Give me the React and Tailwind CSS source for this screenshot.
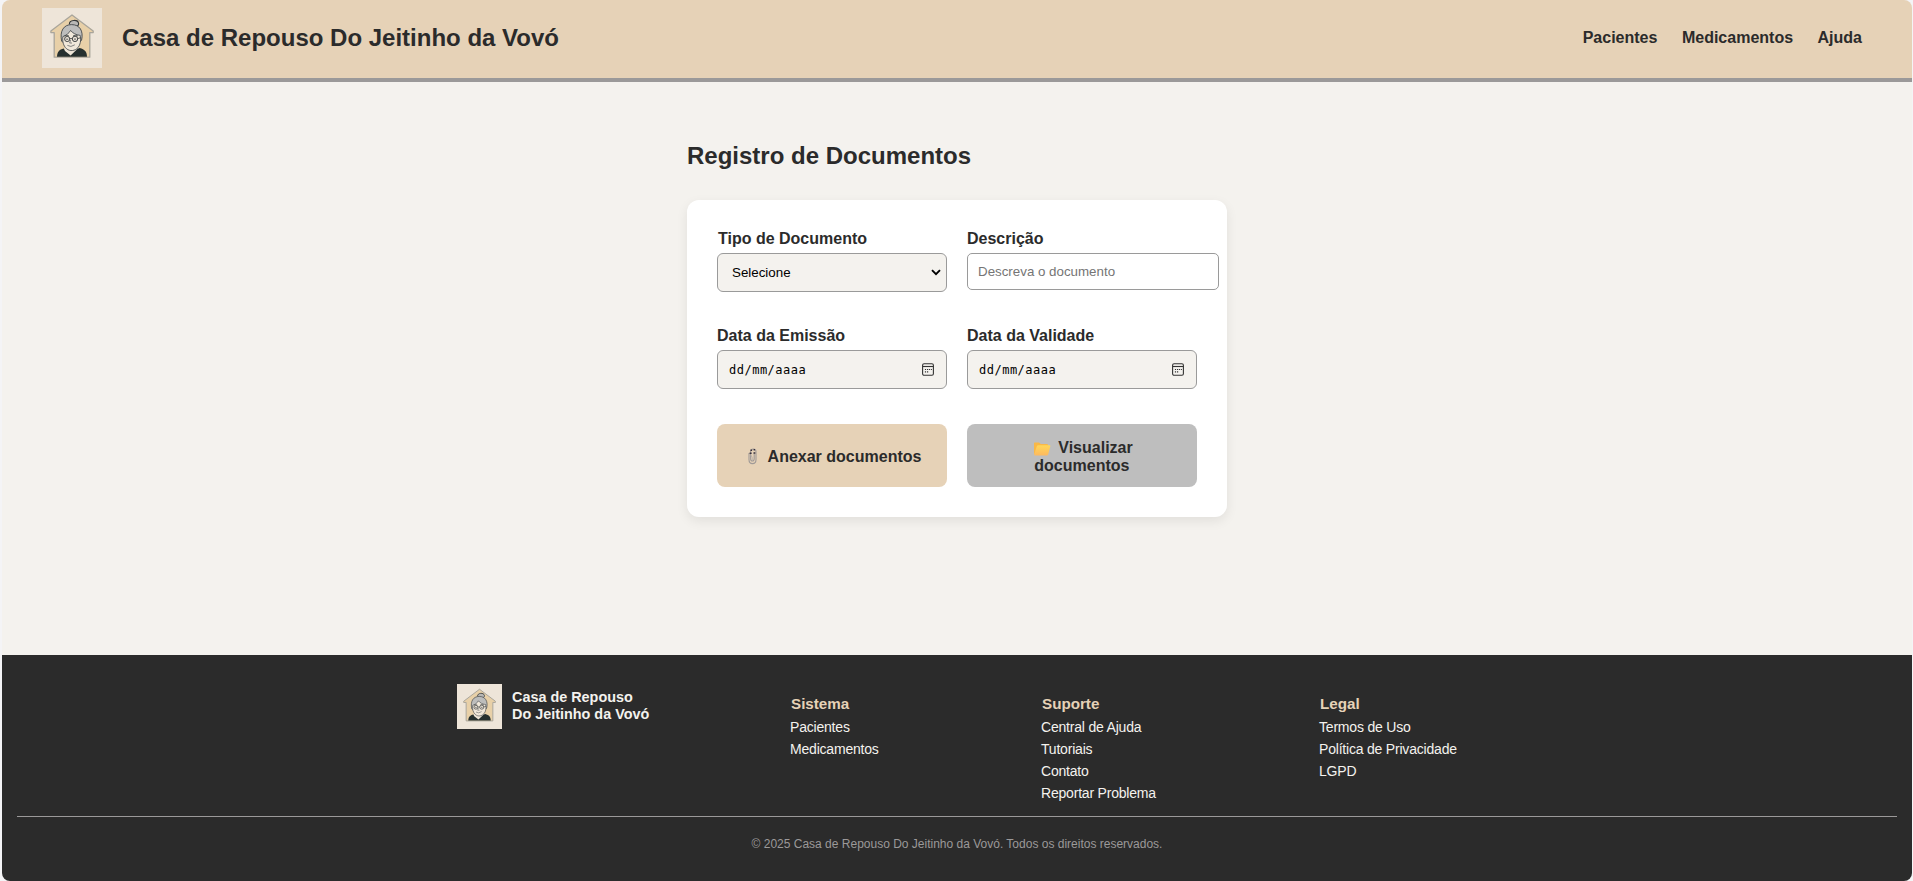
import React from "react";

function Logo({ className }) {
  return (
    <svg viewBox="0 0 60 60" className={className} aria-hidden="true">
      <rect width="60" height="60" fill="#eee5d9" />
      <path
        d="M30 7 L51.2 23 V24.6 H47.8 V49.2 H12.2 V24.6 H8.9 V23 Z"
        fill="#e8d0a8"
        stroke="#a9a59b"
        strokeWidth="1.3"
        strokeLinejoin="round"
      />
      <path d="M23 38 L36 36 L37 41.5 L29 48 L22 43 Z" fill="#efe6d8" />
      <path
        d="M15 48.8 C15.4 44 17 41.8 21.8 40.6 L23 43 L28.6 47.4 L35.6 40.8 L37.6 40 C43 41.4 45 44 45 48.8 Z"
        fill="#26302f"
      />
      <path
        d="M27.4 16.4 C27 11.6 36 11 36.6 15.4 C36.8 17 35.6 18 34.6 18.2"
        fill="#b9b8b6"
        stroke="#35393a"
        strokeWidth="1.1"
      />
      <path
        d="M19.6 33 C17.6 23 21.6 16.6 29.6 16.6 C37.8 16.6 41.6 23 39.6 32 L38 34 L21 34.5 Z"
        fill="#bdbdbc"
        stroke="#42464a"
        strokeWidth="0.9"
      />
      <path
        d="M20.9 28.6 C24 27.4 27 25.4 28.6 22.4 C30.8 25.4 34 26.8 38.2 27.4 C39.2 32.6 38.4 36.6 36 39.6 C33 43 28 43.6 24.6 40.8 C21.2 37.8 20.3 33 20.9 28.6 Z"
        fill="#f1e8da"
        stroke="#3c4144"
        strokeWidth="0.8"
      />
      <path d="M22.4 28 Q24.6 26.8 27 28 M31 27.9 Q33.4 26.8 36 28" stroke="#35393a" strokeWidth="0.8" fill="none" />
      <circle cx="25.2" cy="31" r="2.6" fill="#e9e1d5" stroke="#35393a" strokeWidth="0.9" />
      <circle cx="33" cy="30.9" r="2.7" fill="#e9e1d5" stroke="#35393a" strokeWidth="0.9" />
      <path d="M24.2 31.2 h2 M32 31.1 h2 M27.8 30.6 h2.6 M35.7 30.6 L38.4 29.8" stroke="#35393a" strokeWidth="0.8" />
      <path d="M28.6 32 L27.6 35 H30 M25.4 37.4 Q28.8 39.8 32.8 36.8" stroke="#55585a" strokeWidth="0.7" fill="none" />
    </svg>
  );
}

function CalendarIcon() {
  return (
    <svg viewBox="0 0 12 13" className="h-[13px] w-3" fill="none" aria-hidden="true">
      <rect x="0.6" y="0.7" width="10.8" height="11.6" rx="1.5" stroke="#333" strokeWidth="1.1" />
      <path d="M0.8 3.5 H11.2" stroke="#333" strokeWidth="1.1" />
      <path d="M5 6.5 h1.2 M7 6.5 h1.2 M9 6.5 h.9 M2.9 6.5 h1.2 M2.9 8.8 h1.2 M5 8.8 h1.2" stroke="#333" strokeWidth="1.2" />
    </svg>
  );
}

function PaperclipIcon() {
  return (
    <svg viewBox="0 0 9 17" className="h-[17px] w-[9px] shrink-0" fill="none" aria-hidden="true">
      <path d="M1 5 V11.5 C1 17 8 17 8 11.5 V3.5 C8 .1 2.6 .1 2.6 3.5 V10.8 C2.6 13.8 6.2 13.8 6.2 10.8 V5.5" stroke="#a09a97" strokeWidth="1.1" />
      <path d="M2.8 7 L4.2 9.4 V12.2" stroke="#b9b1ab" strokeWidth="1" />
      <path d="M2.5 2.2 h1.6 M5.6 1.7 h1.4 M1.6 5.2 h2 M5.5 4.9 h1.8" stroke="#37303d" strokeWidth="1.5" />
    </svg>
  );
}

function FolderIcon() {
  return (
    <svg viewBox="0 0 17 14" className="mr-[7px] inline-block h-3.5 w-[17px] align-[-3px]" aria-hidden="true">
      <defs>
        <linearGradient id="folder-front" x1="0" y1="0" x2="0" y2="1">
          <stop offset="0" stopColor="#ffd75a" />
          <stop offset="1" stopColor="#fdb95f" />
        </linearGradient>
      </defs>
      <path d="M0 1.2 Q0 0.4 .8 .4 H5 L6.8 2 H13 Q14 2 14 3 V12 H1 Q0 12 0 11 Z" fill="#f9b847" />
      <path d="M4.3 3.2 H15.6 Q16.6 3.2 16.3 4.2 L14.2 12.6 Q13.9 13.6 12.9 13.6 H1 Q0 13.6 .2 12.6 L2.8 4.3 Q3.2 3.2 4.3 3.2 Z" fill="url(#folder-front)" />
    </svg>
  );
}

function DateField({ label }) {
  return (
    <div className="flex flex-col">
      <label className="text-base leading-[18px] font-bold">{label}</label>
      <div className="mt-[5px] flex h-[39px] items-center justify-between rounded-md border border-[#9a9a9a] bg-[#f4f2ee] pr-3 pl-[11px] text-black">
        <span className="font-['DejaVu_Sans_Mono',monospace] text-xs tracking-[0.5px]">dd/mm/aaaa</span>
        <CalendarIcon />
      </div>
    </div>
  );
}

function FooterColumn({ title, links }) {
  return (
    <div className="pt-[11px]">
      <h4 className="pl-px text-[15.2px] leading-[18px] font-bold text-[#e6d2b7]">{title}</h4>
      <ul className="mt-[3px]">
        {links.map((link) => (
          <li key={link} className="text-[14px] leading-[22px] tracking-[-0.2px] whitespace-nowrap">
            <a href="#">{link}</a>
          </li>
        ))}
      </ul>
    </div>
  );
}

export default function App() {
  return (
    <div className="h-[881px] bg-[#f4f4f6] pr-px pl-0.5 font-['Liberation_Sans',Arial,sans-serif] text-[#2b2b2b]">
      <div className="flex h-full flex-col overflow-hidden rounded-lg bg-[#f4f2ee]">
        <header className="flex h-[82px] items-center justify-between border-b-4 border-[#9b9999] bg-[#e6d2b7] pr-[50px] pb-0.5 pl-10">
          <div className="flex items-center gap-5">
            <Logo className="size-[60px]" />
            <h1 className="text-2xl font-bold">Casa de Repouso Do Jeitinho da Vovó</h1>
          </div>
          <nav className="flex gap-[24.5px] text-base font-bold">
            <a href="#">Pacientes</a>
            <a href="#">Medicamentos</a>
            <a href="#">Ajuda</a>
          </nav>
        </header>

        <main className="mx-auto w-[540px] flex-1 pt-[60px]">
          <h2 className="text-2xl leading-7 font-bold">Registro de Documentos</h2>
          <form className="mt-[30px] grid h-[317px] grid-cols-[230px_230px] content-start gap-x-5 rounded-xl bg-white px-[30px] pt-[30px] shadow-[0_4px_12px_rgba(0,0,0,0.08)]">
            <div className="flex h-[97px] flex-col">
              <label className="pl-px text-base leading-[18px] font-bold">Tipo de Documento</label>
              <div className="mt-[5px] flex h-[39px] items-center justify-between rounded-md border border-[#9a9a9a] bg-[#f4f2ee] pr-[5px] pl-3.5 text-[13.33px] text-black">
                <span>Selecione</span>
                <svg viewBox="0 0 10 7" className="h-[7px] w-2.5" fill="none" aria-hidden="true">
                  <path d="M1 1.2 L5 5.2 L9 1.2" stroke="#000" strokeWidth="1.9" />
                </svg>
              </div>
            </div>
            <div className="flex h-[97px] flex-col">
              <label className="text-base leading-[18px] font-bold">Descrição</label>
              <input
                type="text"
                placeholder="Descreva o documento"
                className="mt-[5px] h-[37px] w-[252px] rounded-[5px] border border-[#9a9a9a] bg-white px-2.5 text-[13.33px] placeholder:text-[#757575]"
              />
            </div>
            <DateField label="Data da Emissão" />
            <DateField label="Data da Validade" />
            <button type="button" className="mt-[35px] flex h-[63px] items-center justify-center gap-[11px] rounded-lg bg-[#e6d2b7] pt-0.5 pl-[5px] text-base font-bold">
              <PaperclipIcon />
              <span>Anexar documentos</span>
            </button>
            <button type="button" className="mt-[35px] flex h-[63px] items-center justify-center rounded-lg bg-[#bebebe] pt-0.5 pl-[3px] text-left text-base leading-[18px] font-bold">
              <span className="whitespace-nowrap">
                <FolderIcon />
                Visualizar
                <br />
                documentos
              </span>
            </button>
          </form>
        </main>

        <footer className="h-[226px] bg-[#2b2b2b] px-[15px] pt-[29px] text-[#f4f2ee]">
          <div className="mx-auto grid h-[132px] w-[1000px] grid-cols-[333px_251px_278px_auto] items-start">
            <div className="flex items-center gap-2.5">
              <Logo className="size-[45px]" />
              <p className="pb-0.5 text-[14.4px] leading-[17px] font-bold">
                Casa de Repouso
                <br />
                Do Jeitinho da Vovó
              </p>
            </div>
            <FooterColumn title="Sistema" links={["Pacientes", "Medicamentos"]} />
            <FooterColumn title="Suporte" links={["Central de Ajuda", "Tutoriais", "Contato", "Reportar Problema"]} />
            <FooterColumn title="Legal" links={["Termos de Uso", "Política de Privacidade", "LGPD"]} />
          </div>
          <p className="border-t border-[#9b9999] pt-5 text-center text-xs leading-[15px] text-[#9b9999]">
            © 2025 Casa de Repouso Do Jeitinho da Vovó. Todos os direitos reservados.
          </p>
        </footer>
      </div>
    </div>
  );
}
